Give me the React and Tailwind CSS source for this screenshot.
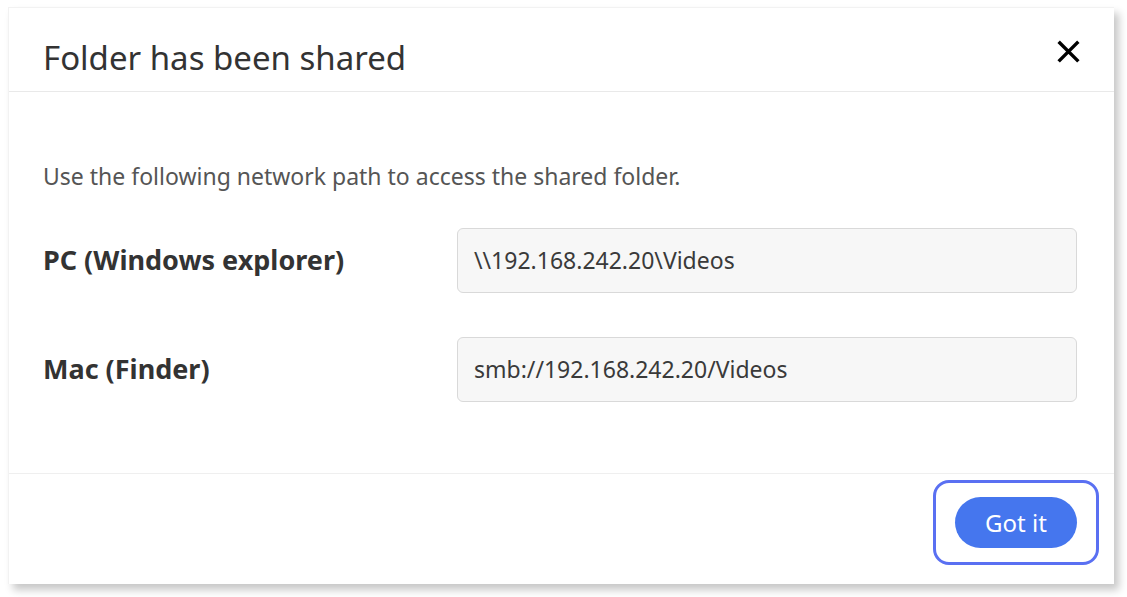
import React from 'react';

/* ─── one path row ─────────────────────────────────────────── */
const PathRow = ({ label, value }) => (
  <div className="flex items-center">
    <div className="w-[414px] text-[27px] font-bold text-[#333]">{label}</div>
    <div className="w-[620px] h-[65px] flex items-center px-[16px] rounded-[6px] border border-[#d9d9d9] bg-[#f7f7f7] text-[23px] text-[#3a3a3a]">
      {value}
    </div>
  </div>
);

export default function App() {
  return (
    <div className="min-h-[597px] bg-white pt-[7px] pl-[8px]"
         style={{ fontFamily: '"Noto Sans", "Open Sans", sans-serif' }}>
      <div className="w-[1106px] h-[577px] flex flex-col bg-white border-l border-t border-[#f2f2f2] shadow-[5px_6px_8px_rgba(0,0,0,0.22)]">

        {/* header ---------------------------------------------------------- */}
        <header className="h-[84px] shrink-0 flex items-center justify-between pl-[34px] pr-[34px] pt-[16px] border-b border-[#e9e9e9]">
          <h1 className="text-[33px] text-[#333] leading-none">Folder has been shared</h1>
          <button type="button" className="w-[26px] h-[26px] flex items-center justify-center -mt-[12px] mr-[-1px]">
            <svg viewBox="0 0 24 24" width="23" height="23" fill="none" stroke="#000" strokeWidth="3.6" strokeLinecap="square">
              <path d="M3 3L21 21M21 3L3 21" />
            </svg>
          </button>
        </header>

        {/* body ------------------------------------------------------------ */}
        <section className="h-[382px] shrink-0 pl-[34px] pr-[36px] pt-[73px] border-b border-[#efefef]">
          <p className="text-[23px] text-[#555] leading-none">
            Use the following network path to access the shared folder.
          </p>
          <div className="mt-[40px] flex flex-col gap-[44px]">
            <PathRow label="PC (Windows explorer)" value={'\\\\192.168.242.20\\Videos'} />
            <PathRow label="Mac (Finder)" value="smb://192.168.242.20/Videos" />
          </div>
        </section>

        {/* footer ---------------------------------------------------------- */}
        <footer className="flex-1 flex items-start justify-end pt-[6px] pr-[15px]">
          <div className="rounded-[16px] border-[3px] border-[#5a70f2] px-[19px] py-[14px]">
            <button type="button"
                    className="w-[122px] h-[51px] rounded-full bg-[#4576ee] text-white text-[24px] leading-none">
              Got it
            </button>
          </div>
        </footer>
      </div>
    </div>
  );
}
